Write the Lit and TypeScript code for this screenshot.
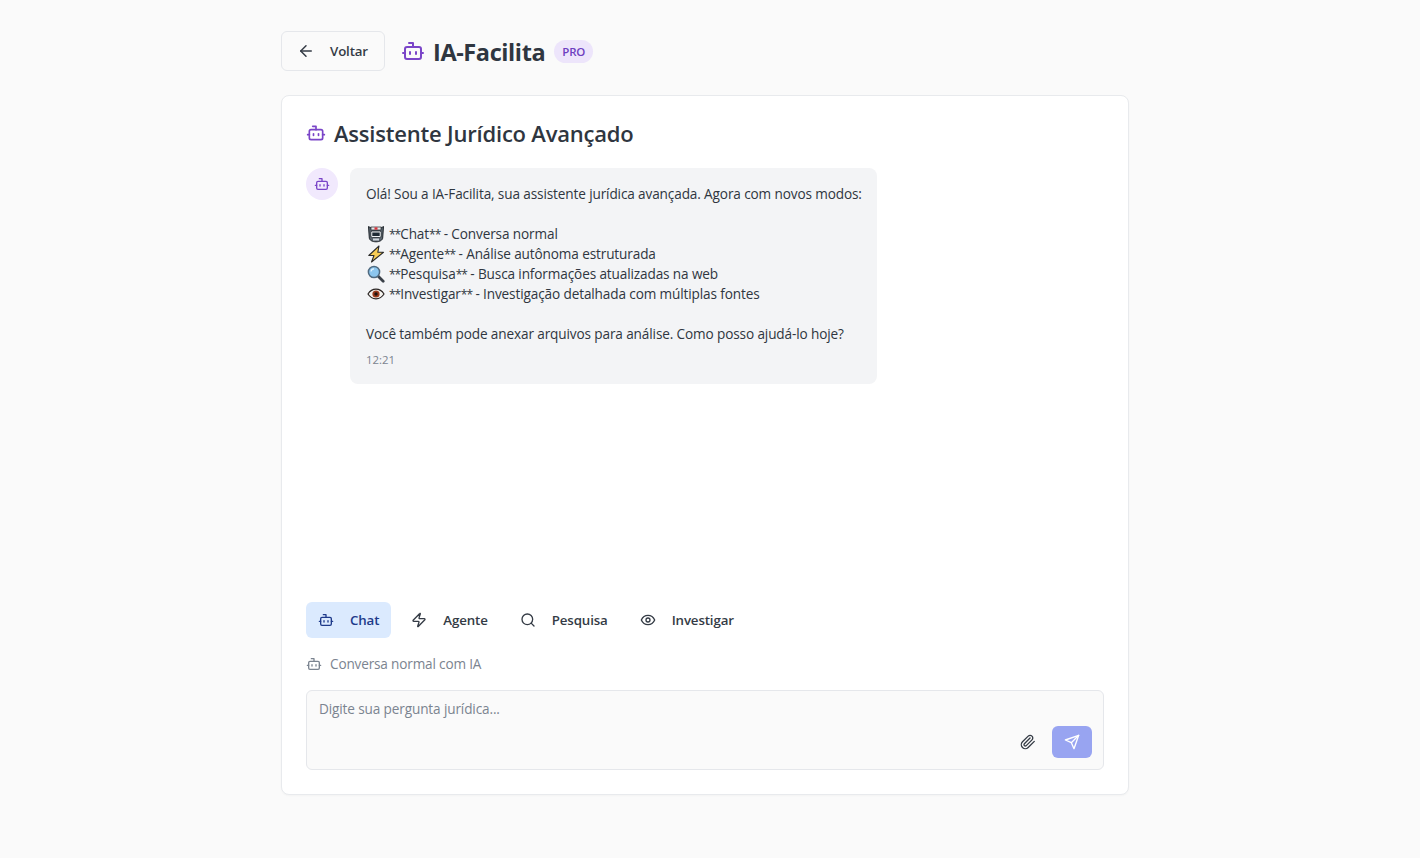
import { LitElement, html, css, svg } from "lit";
import { customElement } from "lit/decorators.js";

const icon = (body: unknown, size = 16) => html`<svg width=${size} height=${size} viewBox="0 0 24 24" fill="none" stroke="currentColor" stroke-width="2" stroke-linecap="round" stroke-linejoin="round">${body}</svg>`;
const bot = svg`<path d="M12 8V4H8"/><rect x="4" y="8" width="16" height="12" rx="2"/><path d="M2 14h2"/><path d="M20 14h2"/><path d="M15 13v2"/><path d="M9 13v2"/>`;
const zap = svg`<path d="M4 14a1 1 0 0 1-.78-1.63l9.9-10.2a.5.5 0 0 1 .86.46l-1.92 6.02A1 1 0 0 0 13 10h7a1 1 0 0 1 .78 1.63l-9.9 10.2a.5.5 0 0 1-.86-.46l1.92-6.02A1 1 0 0 0 11 14z"/>`;
const search = svg`<circle cx="11" cy="11" r="8"/><path d="m21 21-4.3-4.3"/>`;
const eye = svg`<path d="M2 12s3-7 10-7 10 7 10 7-3 7-10 7-10-7-10-7Z"/><circle cx="12" cy="12" r="3"/>`;
const clip = svg`<path d="m21.44 11.05-9.19 9.19a6 6 0 0 1-8.49-8.49l8.57-8.57A4 4 0 1 1 18 8.84l-8.59 8.57a2 2 0 0 1-2.83-2.83l8.49-8.48"/>`;
const send = svg`<path d="m22 2-7 20-4-9-9-4Z"/><path d="M22 2 11 13"/>`;
const arrow = svg`<path d="m12 19-7-7 7-7"/><path d="M19 12H5"/>`;

const emojiRobot = html`<svg class="emoji" width="18" height="18" viewBox="0 0 18 18"><path d="M1.500 1.500 4 3h10l2.500-1.500-.8 11.500c-.2 2.200-3 3.800-6.700 3.800S2.500 15.200 2.300 13z" fill="#59636c" stroke="#20262c" stroke-width="1"/><rect x="4" y="2" width="10" height="3" fill="#e8eaec" stroke="#20262c" stroke-width=".7"/><rect x="7.500" y="2.300" width="3" height="2.400" fill="#d8343c"/><rect x="3.800" y="6" width="10.400" height="6.500" rx="1.500" fill="#eef2f5" stroke="#20262c" stroke-width=".8"/><rect x="5.300" y="7.500" width="7.400" height="3.500" fill="#1e2a34"/><rect x="6" y="13.500" width="6" height="2" fill="#cfd6dc"/></svg>`;
const emojiZap = html`<svg class="emoji" width="18" height="18" viewBox="0 0 18 18"><path d="M12 1 1.800 10.500h5.200L4.500 17 16.500 7.300h-5.700z" fill="#f8cd55" stroke="#2a2a2a" stroke-width="1.100" stroke-linejoin="round"/></svg>`;
const emojiSearch = html`<svg class="emoji" width="18" height="18" viewBox="0 0 18 18"><path d="m11 11 5.200 5.200" stroke="#3a4048" stroke-width="2.800" stroke-linecap="round"/><circle cx="7" cy="7" r="5.600" fill="#8cc6ee" stroke="#4f6a80" stroke-width="1.500"/><path d="M4 6.500a3.200 3.200 0 0 1 3-2.600" fill="none" stroke="#e3f3fd" stroke-width="1.200"/></svg>`;
const emojiEye = html`<svg class="emoji" width="18" height="18" viewBox="0 0 18 18"><path d="M1 9s3-4.800 8-4.800S17 9 17 9s-3 4.800-8 4.800S1 9 1 9z" fill="#f6f4f0" stroke="#2a2422" stroke-width="1.200"/><circle cx="9" cy="9" r="3.600" fill="#9a3a1c"/><circle cx="9" cy="9" r="1.700" fill="#1d1210"/></svg>`;

const item = (emoji: unknown, label: string, rest: string) =>
  html`<div class="line">${emoji}<span><span class="ast">**</span>${label}<span class="ast">**</span>${rest}</span></div>`;

@customElement("app-root")
export class AppRoot extends LitElement {
  static styles = css`
    :host { display: block; min-height: 858px; background: #fafafa; color: #2f3640; font-family: "Open Sans", "Noto Sans", sans-serif; box-sizing: border-box; }
    * { box-sizing: border-box; }
    .wrap { width: 848px; margin-left: 281px; padding-top: 31px; display: flex; flex-direction: column; gap: 24px; }
    .header { display: flex; align-items: center; gap: 16px; height: 40px; }
    .back { display: flex; align-items: center; gap: 15px; width: 104px; height: 40px; padding: 0 15px; background: #fafafa; border: 1px solid #e5e7eb; border-radius: 6px; font-size: 13.3px; font-weight: 600; letter-spacing: -.15px; color: #343b45; }
    .brand { display: flex; align-items: center; gap: 8px; }
    .brand svg { color: #7a45c8; }
    .brand h1 { margin: 2px 0 0; font-size: 23.5px; font-weight: 700; line-height: 32px; letter-spacing: -.4px; color: #2f3640; }
    .pro { margin-left: 1px; display: flex; align-items: center; height: 23px; padding: 0 8px; border-radius: 12px; background: #ede5fb; color: #6d3fc0; font-size: 11.5px; font-weight: 600; letter-spacing: -.15px; }
    .card { height: 700px; background: #fff; border: 1px solid #e8eaed; border-radius: 8px; padding: 24px; display: flex; flex-direction: column; box-shadow: 0 1px 2px rgba(0,0,0,.03); }
    .title { display: flex; align-items: center; gap: 8px; height: 26px; margin-bottom: 22px; }
    .title svg { color: #7a45c8; }
    .title h2 { margin: 0; font-size: 22px; font-weight: 600; letter-spacing: -.2px; color: #2f3640; }
    .msgs { flex: 1; display: flex; gap: 12px; align-items: flex-start; min-height: 0; }
    .avatar { width: 32px; height: 32px; border-radius: 50%; background: #f1e9fd; color: #7a45c8; display: flex; align-items: center; justify-content: center; flex: none; }
    .bubble { width: 527px; height: 216px; background: #f3f4f6; border-radius: 8px; padding: 16px; font-size: 13.6px; line-height: 20px; color: #2f3640; letter-spacing: -.125px; }
    .line { display: flex; align-items: center; height: 20px; white-space: pre; }
    .ast { font-size: 12px; letter-spacing: -1px; vertical-align: .5px; }
    .emoji { margin: 0 4px 0 1px; flex: none; }
    .time { margin-top: 8px; font-size: 11.4px; line-height: 16px; color: #7b8490; letter-spacing: 0; }
    .modes { display: flex; gap: 8px; margin-bottom: 16px; }
    .mode { display: flex; align-items: center; gap: 16px; height: 36px; padding: 0 12px; border-radius: 6px; font-size: 13.3px; font-weight: 600; color: #343b45; letter-spacing: -.13px; }
    .mode.on { background: #dbeafe; color: #1e3a8a; }
    .desc { display: flex; align-items: center; gap: 8px; height: 20px; margin-bottom: 16px; font-size: 13.6px; color: #7b8490; letter-spacing: -.17px; }
    .desc span { margin-bottom: 2px; }
    .input { position: relative; height: 80px; background: #fafafa; border: 1px solid #e5e7eb; border-radius: 6px; }
    textarea { display: block; width: 100%; height: 100%; padding: 8px 12px; border: 0; outline: 0; resize: none; background: transparent; font: inherit; font-size: 13.6px; line-height: 20px; letter-spacing: -.13px; }
    textarea::placeholder { color: #7b8490; opacity: 1; }
    .actions { position: absolute; right: 11px; bottom: 11px; display: flex; align-items: center; gap: 16px; }
    .clip { color: #343b45; display: flex; }
    .send { width: 40px; height: 32px; border-radius: 6px; background: #98a4f1; color: #fff; display: flex; align-items: center; justify-content: center; }
  `;

  render() {
    return html`<div class="wrap">
      <div class="header">
        <div class="back">${icon(arrow, 18)}<span>Voltar</span></div>
        <div class="brand">${icon(bot, 24)}<h1>IA-Facilita</h1><span class="pro">PRO</span></div>
      </div>
      <div class="card">
        <div class="title">${icon(bot, 20)}<h2>Assistente Jurídico Avançado</h2></div>
        <div class="msgs">
          <div class="avatar">${icon(bot)}</div>
          <div class="bubble">
            <div class="line">Olá! Sou a IA-Facilita, sua assistente jurídica avançada. Agora com novos modos:</div>
            <div class="line"></div>
            ${item(emojiRobot, "Chat", " - Conversa normal")}
            ${item(emojiZap, "Agente", " - Análise autônoma estruturada")}
            ${item(emojiSearch, "Pesquisa", " - Busca informações atualizadas na web")}
            ${item(emojiEye, "Investigar", " - Investigação detalhada com múltiplas fontes")}
            <div class="line"></div>
            <div class="line">Você também pode anexar arquivos para análise. Como posso ajudá-lo hoje?</div>
            <div class="time">12:21</div>
          </div>
        </div>
        <div class="modes">
          <div class="mode on">${icon(bot)}<span>Chat</span></div>
          <div class="mode">${icon(zap)}<span>Agente</span></div>
          <div class="mode">${icon(search)}<span>Pesquisa</span></div>
          <div class="mode">${icon(eye)}<span>Investigar</span></div>
        </div>
        <div class="desc">${icon(bot)}<span>Conversa normal com IA</span></div>
        <div class="input">
          <textarea placeholder="Digite sua pergunta jurídica..."></textarea>
          <div class="actions">
            <span class="clip">${icon(clip)}</span>
            <span class="send">${icon(send)}</span>
          </div>
        </div>
      </div>
    </div>`;
  }
}
